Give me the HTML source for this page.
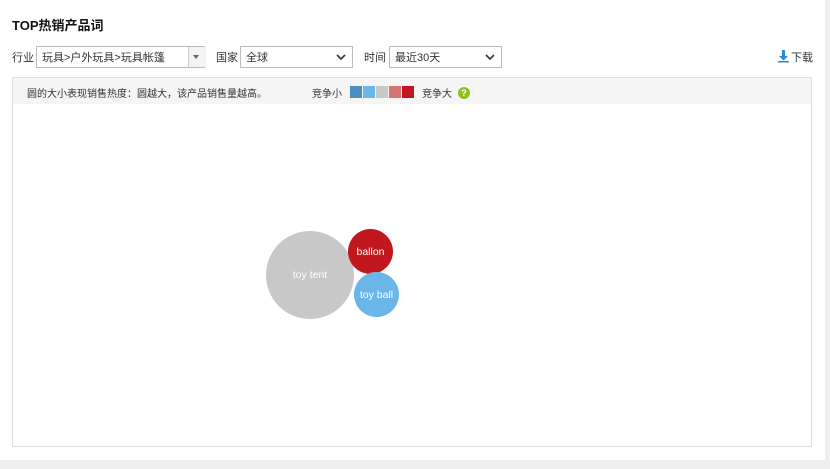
<!DOCTYPE html>
<html><head><meta charset="utf-8"><style>
body{margin:0;width:830px;height:469px;background:#efefef;font-family:"Liberation Sans","Noto Sans CJK SC",sans-serif;position:relative;overflow:hidden}
.panel{position:absolute;left:0;top:0;width:825px;height:460px;background:#fff}
.t{position:absolute;left:12px;top:15px;font-size:13px;font-weight:bold;color:#111}
.lbl{position:absolute;top:49px;font-size:11px;color:#333}
.sel{position:absolute;top:46px;height:22px;border:1px solid #bbb;box-sizing:border-box;font-size:11px;color:#333;padding:2px 5px;background:#fff}
.box{position:absolute;left:12px;top:77px;width:800px;height:370px;border:1px solid #ddd;box-sizing:border-box}
.hd{height:26px;background:#f5f5f5;font-size:10px;color:#333;position:relative}
.sw{position:absolute;top:10px;width:12px;height:12px}
.c{position:absolute;border-radius:50%;color:#fff;font-size:10.5px;display:flex;align-items:center;justify-content:center}
.chev{position:absolute;right:6px;top:6px}
</style></head><body>
<div class="panel">
<div class="t">TOP热销产品词</div>
<div class="lbl" style="left:12px">行业</div>
<div class="sel" style="left:36px;width:169px">玩具&gt;户外玩具&gt;玩具帐篷<span style="position:absolute;left:151px;top:0;width:17px;height:20px;border-left:1px solid #ccc;background:#f3f3f3"></span><span style="position:absolute;left:156px;top:8px;border:3px solid transparent;border-top:4px solid #666"></span></div>
<div class="lbl" style="left:216px">国家</div>
<div class="sel" style="left:240px;width:113px">全球<svg class="chev" width="10" height="8"><path d="M1 2l4 4 4-4" stroke="#333" stroke-width="1.6" fill="none"/></svg></div>
<div class="lbl" style="left:364px">时间</div>
<div class="sel" style="left:389px;width:113px">最近30天<svg class="chev" width="10" height="8"><path d="M1 2l4 4 4-4" stroke="#333" stroke-width="1.6" fill="none"/></svg></div>
<svg style="position:absolute;left:778px;top:49px" width="11" height="14"><path d="M4 1h3v6h3l-4.5 4.5L1 7h3z" fill="#2a8ad4"/><rect x="0" y="12" width="11" height="1.5" fill="#2a8ad4"/></svg>
<div style="position:absolute;left:791px;top:49px;font-size:11px;color:#333">下载</div>
<div class="box">
<div class="hd"><span style="position:absolute;left:14px;top:7px">圆的大小表现销售热度：圆越大，该产品销售量越高。</span>
<span style="position:absolute;left:299px;top:7px">竞争小</span>
<div class="sw" style="left:337px;top:8px;background:#4a8fc2"></div>
<div class="sw" style="left:350px;top:8px;background:#6ab6e8"></div>
<div class="sw" style="left:363px;top:8px;background:#c8c8c8"></div>
<div class="sw" style="left:376px;top:8px;background:#d87373"></div>
<div class="sw" style="left:389px;top:8px;background:#c0181e"></div>
<span style="position:absolute;left:409px;top:7px">竞争大</span>
<span style="position:absolute;left:445px;top:9px;width:12px;height:12px;border-radius:50%;background:#8dc21f;color:#fff;font-size:9px;font-weight:bold;text-align:center;line-height:12px">?</span>
</div>
</div>
<div class="c" style="left:266px;top:231px;width:88px;height:88px;background:#c8c8c8">toy tent</div>
<div class="c" style="left:348px;top:229px;width:45px;height:45px;background:#c0181e">ballon</div>
<div class="c" style="left:354px;top:272px;width:45px;height:45px;background:#6ab6e8">toy ball</div>
</div>
</body></html>
